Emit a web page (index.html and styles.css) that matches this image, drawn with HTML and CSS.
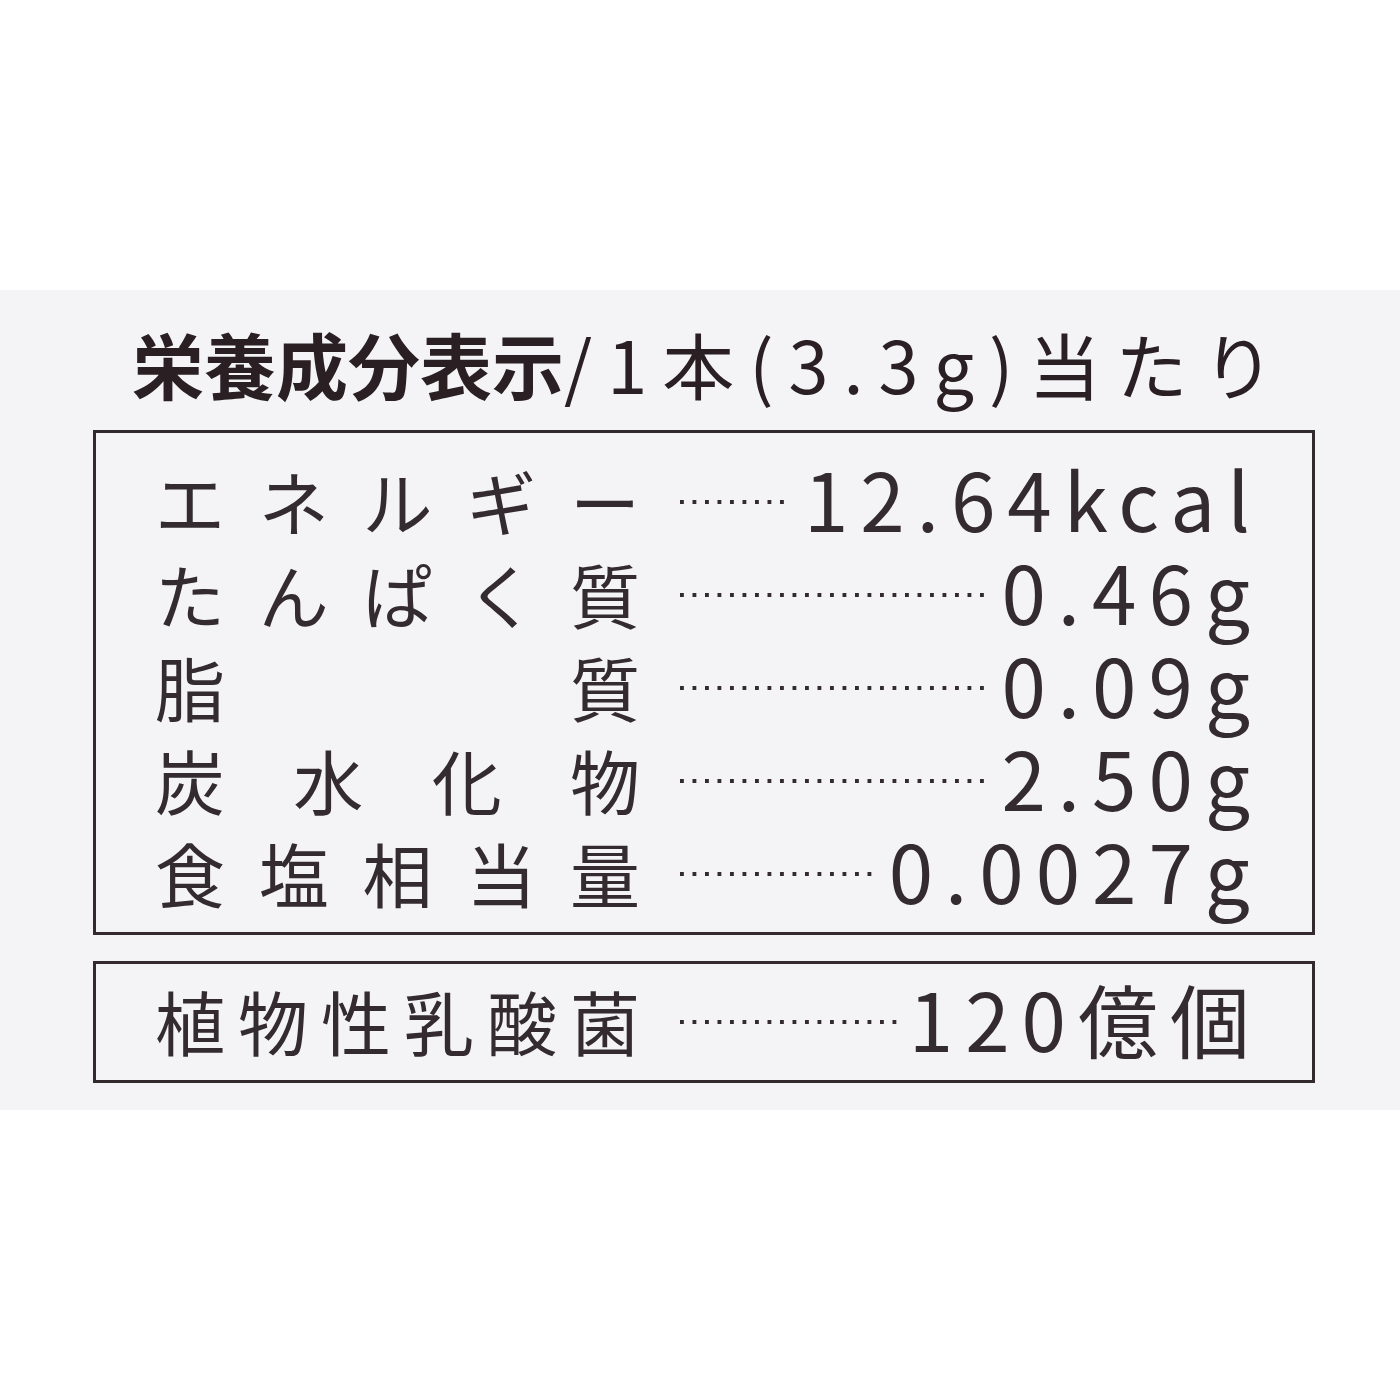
FILE: index.html
```html
<!DOCTYPE html>
<html lang="ja">
<head>
<meta charset="utf-8">
<title>栄養成分表示</title>
<link rel="stylesheet" href="styles.css">
</head>
<body>
<div class="top"></div>
<section class="sheet">
  <h1 class="title"><span class="title-bold">栄養成分表示</span><span class="title-rest">/1本(3.3g)当たり</span></h1>
  <div class="box box-main">
    <div class="row">
      <div class="label"><span>エ</span><span>ネ</span><span>ル</span><span>ギ</span><span>ー</span></div>
      <div class="leader"></div>
      <div class="value">12.64kcal</div>
    </div>
    <div class="row">
      <div class="label"><span>た</span><span>ん</span><span>ぱ</span><span>く</span><span>質</span></div>
      <div class="leader"></div>
      <div class="value">0.46g</div>
    </div>
    <div class="row">
      <div class="label"><span>脂</span><span>質</span></div>
      <div class="leader"></div>
      <div class="value">0.09g</div>
    </div>
    <div class="row">
      <div class="label"><span>炭</span><span>水</span><span>化</span><span>物</span></div>
      <div class="leader"></div>
      <div class="value">2.50g</div>
    </div>
    <div class="row">
      <div class="label"><span>食</span><span>塩</span><span>相</span><span>当</span><span>量</span></div>
      <div class="leader"></div>
      <div class="value">0.0027g</div>
    </div>
  </div>
  <div class="box box-extra">
    <div class="row">
      <div class="label"><span>植</span><span>物</span><span>性</span><span>乳</span><span>酸</span><span>菌</span></div>
      <div class="leader"></div>
      <div class="value">120億個</div>
    </div>
  </div>
</section>
</body>
</html>
```
FILE: styles.css
```css
html, body {
  margin: 0;
  padding: 0;
  background: #ffffff;
}

body {
  font-family: "Noto Sans CJK JP", "Noto Sans", sans-serif;
  color: #332b2f;
  width: 1400px;
  height: 1400px;
}

.top {
  height: 290px;
}

.sheet {
  height: 820px;
  background: #f4f4f6;
  padding-top: 1px;
  box-sizing: border-box;
}

.title {
  margin: 0;
  padding-left: 132px;
  margin-top: 22px;
  height: 117px;
  font-size: 72px;
  line-height: 100px;
  font-weight: 400;
  color: #2a2024;
  white-space: nowrap;
}

.title-bold {
  font-weight: 700;
}

.title-rest {
  letter-spacing: 15px;
}

.box {
  margin-left: 93px;
  width: 1222px;
  box-sizing: border-box;
  border: 3px solid #332a2e;
  padding: 0 62px 0 59px;
}

.box-main {
  height: 505px;
  padding-top: 21px;
  padding-bottom: 13px;
}

.box-extra {
  margin-top: 26px;
  height: 122px;
  padding-top: 10px;
  padding-bottom: 13px;
}

.row {
  display: flex;
  align-items: center;
  height: 93px;
}

.label {
  width: 485px;
  flex: none;
  display: flex;
  justify-content: space-between;
  font-size: 70px;
  line-height: 80px;
  white-space: nowrap;
}

.leader {
  flex: 1;
  height: 4px;
  margin: 2px 12px 0 40px;
  background-image: linear-gradient(to right, #332b2f 4px, transparent 4px);
  background-size: 12.5px 4px;
  background-repeat: repeat-x;
}

.value {
  flex: none;
  font-size: 80px;
  line-height: 80px;
  letter-spacing: 12px;
  margin-right: -12px;
  margin-bottom: 8px;
  white-space: nowrap;
}
```
